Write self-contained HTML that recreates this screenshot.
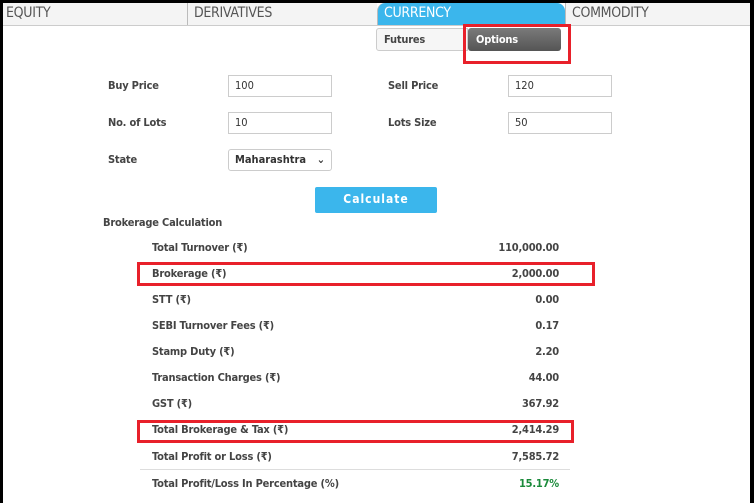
<!DOCTYPE html><html><head><style>
body{margin:0;width:754px;height:503px;background:#fff;font-family:"DejaVu Sans Condensed","Liberation Sans",sans-serif;position:relative;overflow:hidden;color:#444}
.a{position:absolute}
.bl{font-weight:bold;font-size:11px;color:#444;letter-spacing:-0.2px}
.tab{position:absolute;top:3px;height:22px;background:#f4f4f4;border-left:1px solid #bbb;font-size:14px;color:#555;line-height:20px;padding-left:6px;box-sizing:border-box;letter-spacing:-0.3px}
.sel{position:absolute;width:104px;height:22px;border:1px solid #ccc;box-sizing:border-box;font:11px "DejaVu Sans Condensed",sans-serif;padding-left:6px;line-height:20px;color:#333}
.v{position:absolute;right:195px;font-weight:bold;font-size:11px;color:#444;letter-spacing:-0.2px}
.r{position:absolute;border:3px solid #e8202a;box-sizing:border-box}
</style></head><body>
<div class="a" style="left:0;top:0;width:754px;height:3px;background:#000"></div>
<div class="a" style="left:0;top:0;width:3px;height:503px;background:#000"></div>
<div class="a" style="right:0;top:0;width:4px;height:503px;background:#000"></div>
<div class="tab" style="left:3px;width:184px;border-left:none;padding-left:3px">EQUITY</div>
<div class="tab" style="left:187px;width:190px">DERIVATIVES</div>
<div class="tab" style="left:377px;width:188px;background:#3bb6ec;color:#fff;border-radius:8px 8px 0 0">CURRENCY</div>
<div class="tab" style="left:565px;width:185px">COMMODITY</div>
<div class="a" style="left:3px;top:25px;width:747px;height:1px;background:#ccc"></div>
<div class="a" style="left:376px;top:28px;width:92px;height:23px;border:1px solid #ccc;border-radius:3px 0 0 3px;background:#f6f6f6;box-sizing:border-box"></div>
<div class="a bl" style="left:384px;top:33px">Futures</div>
<div class="a" style="left:468px;top:28px;width:93px;height:23px;border-radius:3px;background:linear-gradient(#7a7a7a,#555)"></div>
<div class="a bl" style="left:476px;top:33px;color:#fff">Options</div>
<div class="r" style="left:463px;top:24px;width:108px;height:40px"></div>
<div class="a bl" style="left:108px;top:79px">Buy Price</div>
<div class="a bl" style="left:108px;top:116px">No. of Lots</div>
<div class="a bl" style="left:108px;top:153px">State</div>
<div class="a bl" style="left:388px;top:79px">Sell Price</div>
<div class="a bl" style="left:388px;top:116px">Lots Size</div>
<div class="sel" style="left:228px;top:75px">100</div>
<div class="sel" style="left:228px;top:112px">10</div>
<div class="sel" style="left:228px;top:149px;font-weight:bold;border-radius:3px">Maharashtra <span style="position:absolute;right:6px">⌄</span></div>
<div class="sel" style="left:508px;top:75px">120</div>
<div class="sel" style="left:508px;top:112px">50</div>
<div class="a" style="left:315px;top:187px;width:122px;height:26px;background:#3bb6ec;border-radius:2px;color:#fff;font-weight:bold;font-size:12px;text-align:center;line-height:24px;letter-spacing:1px">Calculate</div>
<div class="a bl" style="left:103px;top:216px">Brokerage Calculation</div>
<div class="a bl" style="left:152px;top:241px">Total Turnover (₹)</div><div class="v" style="top:241px">110,000.00</div>
<div class="a bl" style="left:152px;top:267px">Brokerage (₹)</div><div class="v" style="top:267px">2,000.00</div>
<div class="a bl" style="left:152px;top:293px">STT (₹)</div><div class="v" style="top:293px">0.00</div>
<div class="a bl" style="left:152px;top:319px">SEBI Turnover Fees (₹)</div><div class="v" style="top:319px">0.17</div>
<div class="a bl" style="left:152px;top:345px">Stamp Duty (₹)</div><div class="v" style="top:345px">2.20</div>
<div class="a bl" style="left:152px;top:371px">Transaction Charges (₹)</div><div class="v" style="top:371px">44.00</div>
<div class="a bl" style="left:152px;top:397px">GST (₹)</div><div class="v" style="top:397px">367.92</div>
<div class="a bl" style="left:152px;top:423px">Total Brokerage &amp; Tax (₹)</div><div class="v" style="top:423px">2,414.29</div>
<div class="a bl" style="left:152px;top:450px">Total Profit or Loss (₹)</div><div class="v" style="top:450px">7,585.72</div>
<div class="a bl" style="left:152px;top:477px">Total Profit/Loss In Percentage (%)</div><div class="v" style="top:477px;color:#1a8a3a">15.17%</div>
<div class="a" style="left:140px;top:442px;width:430px;height:1px;background:#ccc"></div>
<div class="a" style="left:140px;top:469px;width:430px;height:1px;background:#ddd"></div>
<div class="r" style="left:137px;top:262px;width:458px;height:24px"></div>
<div class="r" style="left:137px;top:420px;width:437px;height:23px"></div>
</body></html>
